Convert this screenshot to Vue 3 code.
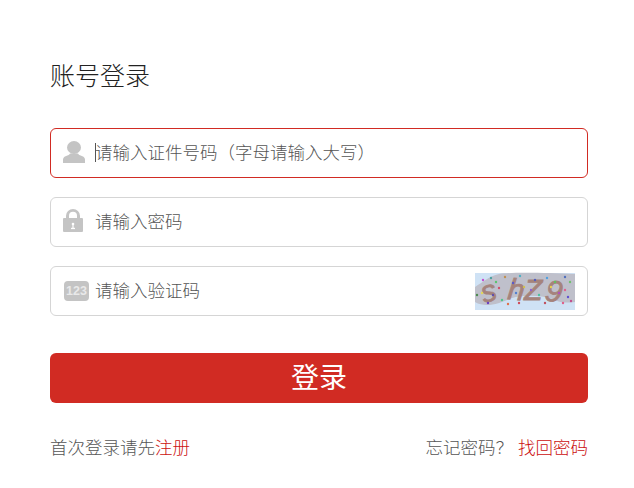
<template>
  <div class="login">
    <h2 class="title">账号登录</h2>

    <div class="field active">
      <svg class="icon" width="24" height="24" viewBox="0 0 24 24">
        <ellipse cx="11" cy="6.500" rx="7" ry="6.500" fill="#c4c4c4"></ellipse>
        <path d="M0 22v-3.500c0-2.400 2.400-3.400 5-4.300 1-.4 1.700-.8 2-1.700h8c.3.900 1 1.300 2 1.700 2.600.9 5 1.900 5 4.300V22z" fill="#c4c4c4"></path>
      </svg>
      <input v-model="account" class="text" type="text" placeholder="请输入证件号码（字母请输入大写）">
      <span class="caret"></span>
    </div>

    <div class="field">
      <svg class="icon lock" width="24" height="24" viewBox="0 0 24 24">
        <path d="M3 10V6.800a7 6.800 0 0 1 14 0V10h-3V6.800a4 4 0 0 0-8 0V10z" fill="#c4c4c4"></path>
        <rect x="0" y="9" width="20" height="14" rx="1" fill="#c4c4c4"></rect>
        <circle cx="10" cy="15" r="1.300" fill="#fff"></circle>
        <rect x="9.400" y="15" width="1.200" height="4" fill="#fff"></rect>
        <rect x="8" y="18.800" width="4" height="1.300" fill="#fff"></rect>
      </svg>
      <input v-model="password" class="text" type="password" placeholder="请输入密码">
    </div>

    <div class="field">
      <span class="code-icon">123</span>
      <input v-model="code" class="text" type="text" placeholder="请输入验证码">
      <svg class="captcha" width="100" height="37" viewBox="0 0 100 37">
        <rect width="100" height="37" fill="#cfe2f5"></rect>
        <path d="M0 14C8 9 14 3 24 1c12-2 50-1 76 0v28c-8 1-14 1-20-2-14-6-36-5-46-1-10 5-24 9-34 3z" fill="#bfc0cb"></path>
        <g class="captcha-chars">
          <text x="9" y="30" transform="rotate(-16 9 30)">s</text>
          <text x="32" y="26" transform="rotate(6 32 26)">h</text>
          <text x="49" y="27">Z</text>
          <text x="69" y="27" transform="rotate(10 69 27)">9</text>
        </g>
        <circle v-for="(d, i) in dots" :key="i" :cx="d[0]" :cy="d[1]" r="1.200" :fill="d[2]"></circle>
      </svg>
    </div>

    <button class="submit" type="button">登录</button>

    <div class="links">
      <span>首次登录请先<a class="red">注册</a></span>
      <span>忘记密码？<a class="red find">找回密码</a></span>
    </div>
  </div>
</template>

<script setup>
import { ref } from 'vue'

const account = ref('')
const password = ref('')
const code = ref('')

const dots = [
  [8, 7, '#c44fd0'], [7, 20, '#e2d85a'], [13, 30, '#6a3fc4'], [21, 9, '#59c46e'], [24, 15, '#d0506a'],
  [2, 22, '#4d8a4f'], [27, 27, '#4ec48a'], [33, 31, '#e0704a'], [38, 10, '#5a5ac8'], [41, 20, '#4f7fd0'],
  [45, 3, '#4fb0c4'], [44, 30, '#d04a5a'], [49, 14, '#d0c04f'], [60, 7, '#5060c0'], [64, 22, '#4fc0a0'],
  [72, 5, '#50a0e0'], [76, 14, '#e8d050'], [80, 9, '#60c060'], [84, 20, '#b050c0'], [90, 17, '#e06090'],
  [93, 24, '#6050d0'], [88, 30, '#e0608a'], [95, 9, '#70c070'], [70, 30, '#c05060'], [56, 17, '#9060d0'],
  [16, 5, '#4fa0a0'], [30, 4, '#c09050'], [90, 4, '#5070c0'], [96, 28, '#c05090'], [18, 22, '#6050b0']
]
</script>

<style>
body {
  background: #fff;
}
</style>

<style scoped>
.login {
  width: 538px;
  padding: 57px 46px 0 50px;
  font-family: "Noto Sans CJK SC", "Liberation Sans", sans-serif;
  font-weight: 300;
  color: #555;
}

.title {
  margin: 0 0 37px;
  height: 34px;
  line-height: 34px;
  font-size: 25px;
  font-weight: 300;
  color: #222;
}

.field {
  position: relative;
  display: flex;
  align-items: center;
  height: 50px;
  margin-bottom: 19px;
  padding: 0 12px;
  box-sizing: border-box;
  border: 1px solid #d5d5d5;
  border-radius: 6px;
}

.field.active {
  border-color: #d12b23;
}

.icon {
  flex: none;
  margin-right: 8px;
}

.lock {
  margin-bottom: 2px;
}

.code-icon {
  flex: none;
  width: 25px;
  height: 20px;
  margin: 0 6px 0 1px;
  border-radius: 4px;
  background: #c4c4c4;
  color: #e9e9e9;
  font-family: "Liberation Sans", sans-serif;
  font-size: 12.500px;
  font-weight: 700;
  line-height: 20px;
  text-align: center;
}

.text {
  flex: 1;
  min-width: 0;
  padding: 0 0 3px;
  border: none;
  outline: none;
  background: transparent;
  font-family: inherit;
  font-weight: 300;
  font-size: 17.500px;
  color: #333;
}

.text::placeholder {
  color: #555;
  opacity: 1;
}

.caret {
  position: absolute;
  left: 44px;
  top: 14px;
  width: 1px;
  height: 19px;
  background: #555;
}

.captcha {
  flex: none;
  overflow: visible;
}

.captcha-chars text {
  font-family: "Liberation Sans", sans-serif;
  font-style: italic;
  font-size: 30px;
  fill: #a5837c;
  stroke: #a5837c;
  stroke-width: 0.800px;
}

.submit {
  display: block;
  width: 100%;
  height: 50px;
  margin-top: 37px;
  padding: 0 0 4px;
  border: none;
  border-radius: 6px;
  background: #d12b23;
  color: #fff;
  font-family: inherit;
  font-weight: 400;
  font-size: 28px;
  cursor: pointer;
}

.links {
  display: flex;
  justify-content: space-between;
  margin-top: 31px;
  height: 26px;
  line-height: 26px;
  font-size: 17.500px;
}

.red {
  color: #cc0f0f;
  cursor: pointer;
}

.find {
  margin-left: 5px;
}
</style>
